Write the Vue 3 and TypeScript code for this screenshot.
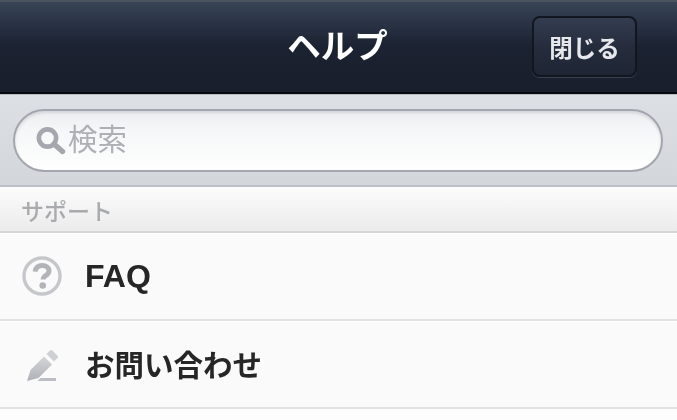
<template>
  <div class="screen">
    <header class="nav-bar">
      <h1 class="nav-title">ヘルプ</h1>
      <button class="btn-close" type="button">閉じる</button>
    </header>

    <div class="search-bar">
      <div class="search-field">
        <svg class="search-icon" viewBox="0 0 30 30" width="30" height="30">
          <circle cx="11.500" cy="12" r="8.600" fill="none" stroke="#a4a7ad" stroke-width="4.600" />
          <path d="M18 18l8.500 7.500" fill="none" stroke="#a4a7ad" stroke-width="5.400" stroke-linecap="round" />
        </svg>
        <span class="search-placeholder">検索</span>
      </div>
    </div>

    <div class="section-title">サポート</div>

    <ul class="menu">
      <li v-for="item in items" :key="item.label" class="menu-row">
        <span class="menu-icon">
          <svg v-if="item.icon === 'faq'" viewBox="0 0 42 42" width="42" height="42">
            <circle cx="21" cy="21" r="18" fill="none" stroke="#c6c7cb" stroke-width="3.400" />
            <path
              d="M14.200 16.600c.3-4 3.200-6.200 7-6.200 3.900 0 6.800 2.200 6.800 5.400 0 2.600-1.500 3.700-3.300 4.900-1.600 1-2.500 1.800-2.500 3.800"
              fill="none"
              stroke="#b3b4b9"
              stroke-width="5"
            />
            <circle cx="21.700" cy="30.500" r="3.300" fill="#b3b4b9" />
          </svg>
          <svg v-else viewBox="0 0 42 42" width="42" height="42">
            <defs>
              <linearGradient id="pencil" x1="0" y1="0" x2="0" y2="1">
                <stop offset="0" stop-color="#d4d5d8" />
                <stop offset="1" stop-color="#aeb1b7" />
              </linearGradient>
            </defs>
            <path d="M6 38l3.500-11 13.500-13.500 8 8L17.500 35z" fill="url(#pencil)" />
            <path d="M25.500 11l3.500-3.500c.8-.8 1.600-.8 2.300 0l5.200 5.200c.7.700.7 1.500 0 2.300L33 18.500z" fill="#cfd0d3" />
            <path d="M19.500 35H35v3H16.500z" fill="#bcbec3" />
          </svg>
        </span>
        <span class="menu-label" :class="{ latin: item.icon === 'faq' }">{{ item.label }}</span>
      </li>
    </ul>
  </div>
</template>

<script setup lang="ts">
interface MenuItem {
  label: string
  icon: 'faq' | 'contact'
}

const items: MenuItem[] = [
  { label: 'FAQ', icon: 'faq' },
  { label: 'お問い合わせ', icon: 'contact' },
]
</script>

<style>
html,
body {
  margin: 0;
  background: #fdfdfd;
}
</style>

<style scoped>
.screen {
  width: 677px;
  height: 420px;
  overflow: hidden;
  font-family: 'Liberation Sans', 'Noto Sans CJK JP', sans-serif;
  background: #fdfdfd;
  filter: blur(0.4px);
}

.nav-bar {
  box-sizing: border-box;
  height: 94px;
  display: flex;
  align-items: center;
  justify-content: flex-end;
  position: relative;
  padding: 0 40px 1px 0;
  border-top: 2px solid #4a525e;
  border-bottom: 2px solid #07090d;
  background: linear-gradient(#394457 0%, #2a3446 22%, #1b2231 50%, #181e2b 100%);
}

.nav-title {
  position: absolute;
  left: 0;
  right: 2px;
  top: 24px;
  margin: 0;
  text-align: center;
  font-size: 33.500px;
  line-height: 42px;
  font-weight: 700;
  color: #fff;
}

.btn-close {
  box-sizing: border-box;
  width: 105px;
  height: 61px;
  padding: 0;
  border: 2px solid #12161f;
  border-radius: 8px;
  font-family: inherit;
  font-size: 23.500px;
  font-weight: 700;
  color: #e6e8ec;
  background: linear-gradient(#333d50 0%, #252d3d 50%, #1e2534 100%);
  box-shadow: 0 1px 0 #3a4352;
}

.search-bar {
  box-sizing: border-box;
  height: 93px;
  padding: 14px 14px 0 13px;
  border-top: 1px solid #b8bbc0;
  border-bottom: 2px solid #bcc0c6;
  background: linear-gradient(#dcdfe3, #d3d6da);
}

.search-field {
  box-sizing: border-box;
  height: 63px;
  display: flex;
  align-items: center;
  gap: 2px;
  padding-left: 21px;
  border: 2px solid #a3a6ae;
  border-radius: 32px;
  background: linear-gradient(#eceef0 0%, #f6f7f8 35%, #fefefe 100%);
  box-shadow: inset 0 2px 3px rgba(120, 124, 132, 0.22);
}

.search-icon {
  flex: none;
}

.search-placeholder {
  font-size: 29.500px;
  line-height: 36px;
  color: #aeb0b5;
  position: relative;
  top: -1px;
}

.section-title {
  box-sizing: border-box;
  height: 46px;
  padding: 10px 0 0 21px;
  font-size: 23px;
  line-height: 30px;
  font-weight: 500;
  color: #a9aaad;
  border-bottom: 2px solid #d6d6d6;
  background: linear-gradient(#fcfcfc, #ebebeb);
}

.menu {
  list-style: none;
  margin: 0;
  padding: 0;
}

.menu-row {
  box-sizing: border-box;
  height: 88px;
  display: flex;
  align-items: center;
  padding: 0 0 1px 21px;
  border-top: 1px solid #fff;
  border-bottom: 2px solid #e2e2e2;
  background: #fafafa;
}

.menu-icon {
  width: 42px;
  height: 42px;
  margin-right: 22px;
  flex: none;
}

.menu-label {
  font-size: 29.500px;
  line-height: 36px;
  font-weight: 700;
  color: #262626;
  position: relative;
  top: 2px;
}

.menu-label.latin {
  font-size: 32px;
  top: 0;
}
</style>
